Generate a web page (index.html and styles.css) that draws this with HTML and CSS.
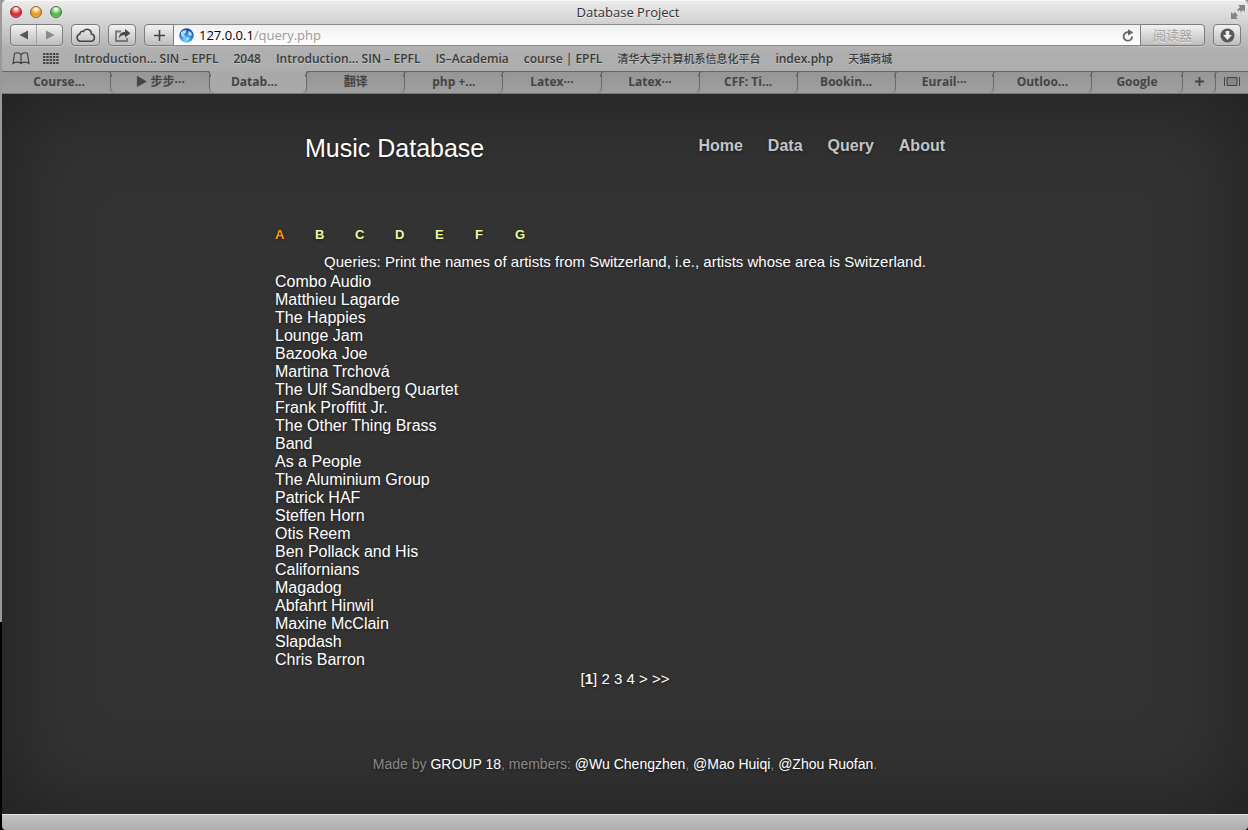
FILE: index.html
```html
<!DOCTYPE html>
<html lang="en">
<head>
<meta charset="utf-8">
<title>Database Project</title>
<link rel="stylesheet" href="styles.css">
</head>
<body>
<div class="desktop">
<div class="window">
  <header class="chrome">
    <div class="titlebar">
      <div class="lights">
        <button class="light red" aria-label="Close"></button>
        <button class="light amber" aria-label="Minimize"></button>
        <button class="light green" aria-label="Zoom"></button>
      </div>
      <div class="window-title">Database Project</div>
      <button class="fullscreen" aria-label="Full screen">
        <svg width="16" height="16" viewBox="0 0 16 16" fill="#858585"><path d="M8 1h7v7l-2-2-3 3-3-3 3-3zM1 8l2 2 2-2 3 3-2 2 2 2H1z"/><path d="M6 9.500L9.500 6l1.500 1.500L7.500 11z" fill="#dedede"/></svg>
      </button>
    </div>
    <div class="toolbar">
      <div class="pair">
        <button class="pair-btn" aria-label="Back"><svg width="10" height="10" viewBox="0 0 10 10"><path d="M9 .5v9L.5 5z" fill="#555"/></svg></button>
        <button class="pair-btn" aria-label="Forward"><svg width="10" height="10" viewBox="0 0 10 10"><path d="M1 .5v9L9.500 5z" fill="#888"/></svg></button>
      </div>
      <button class="tool" aria-label="iCloud tabs"><svg width="20" height="15" viewBox="0 0 20 15"><path d="M4.500 13.200a3.600 3.600 0 0 1-.6-7.100 2.500 2.500 0 0 1 3.500-2.500 4.200 4.200 0 0 1 7.900 2.500 3.600 3.600 0 0 1 .2 7.100z" fill="none" stroke="#444" stroke-width="1.500"/></svg></button>
      <button class="tool narrow" aria-label="Share"><svg width="17" height="15" viewBox="0 0 17 15"><path d="M7 3.500H2v9.500h11v-3" fill="none" stroke="#777" stroke-width="1.800"/><path d="M5 10.500c.2-4.500 2-6.500 6-6.500V1l5.500 4.300L11 9.500V6.900C8 6.900 6.500 7.700 5 10.500z" fill="#4a4a4a"/></svg></button>
      <div class="address">
        <button class="addr-btn add" aria-label="Add bookmark"><svg width="11" height="11" viewBox="0 0 11 11"><path d="M5.500 0v11M0 5.500h11" stroke="#444" stroke-width="1.600"/></svg></button>
        <div class="field">
          <svg class="globe" width="15" height="15" viewBox="0 0 15 15"><defs><radialGradient id="sea" cx="45%" cy="80%" r="80%"><stop offset="0" stop-color="#7fe0ff"/><stop offset=".5" stop-color="#2f86e0"/><stop offset="1" stop-color="#1c3f9f"/></radialGradient></defs><circle cx="7.500" cy="7.500" r="7.200" fill="url(#sea)"/><path d="M2 4.500l3-2.500 2.500.5-.5 2L5.500 6l-1 .5 1.500 1.500-.5 2L4 9 2 7zM9.500 3l2.500 1 1 3-2 1-2-1.500zM8 9l2.500.5L9 12.500 7.500 11z" fill="#d5f0ff" opacity=".8"/></svg>
          <div class="url"><span class="host">127.0.0.1</span>/query.php</div>
          <button class="reload" aria-label="Reload"><svg width="12" height="13" viewBox="0 0 12 13"><path d="M10.200 7.500A4.300 4.300 0 1 1 7 3.200" fill="none" stroke="#666" stroke-width="1.800"/><path d="M6 .2l5.300 3.400L6 6.500z" fill="#666"/></svg></button>
        </div>
        <button class="addr-btn reader" disabled>阅读器</button>
      </div>
      <button class="tool downloads" aria-label="Downloads"><svg width="15" height="15" viewBox="0 0 15 15"><circle cx="7.500" cy="7.500" r="7" fill="#585858"/><path d="M5.700 3h3.600v4h2.700l-4.500 5L3 7h2.700z" fill="#eee"/></svg></button>
    </div>
    <nav class="bookmarks" aria-label="Bookmarks">
      <button class="plain" aria-label="All bookmarks"><svg width="18" height="13" viewBox="0 0 18 13"><path d="M9 2.500C7 .5 4 .5 2.500 1.500L1 11.500C3.500 10 7 10 9 11.500 11 10 14.500 10 17 11.500L15.500 1.500C14 .5 11 .5 9 2.500zM9 2.500v9" fill="none" stroke="#444" stroke-width="1.200"/></svg></button>
      <button class="plain" aria-label="Top sites"><svg width="16" height="12" viewBox="0 0 16 12"><path d="M0 1h16M0 4h16M0 7h16M0 10h16" stroke="#444" stroke-width="2" stroke-dasharray="2.400 .9"/></svg></button>
      <a href="#">Introduction... SIN – EPFL</a>
      <a href="#">2048</a>
      <a href="#">Introduction... SIN – EPFL</a>
      <a href="#">IS–Academia</a>
      <a href="#">course | EPFL</a>
      <a href="#" class="cjk">清华大学计算机系信息化平台</a>
      <a href="#">index.php</a>
      <a href="#" class="cjk">天猫商城</a>
    </nav>
    <div class="tabs" role="tablist">
      <button class="tab first" role="tab">Course...</button>
      <button class="tab before" role="tab">▶ 步步···</button>
      <button class="tab before active" role="tab" aria-selected="true">Datab...</button>
      <button class="tab after" role="tab">翻译</button>
      <button class="tab after" role="tab">php +...</button>
      <button class="tab after" role="tab">Latex···</button>
      <button class="tab after" role="tab">Latex···</button>
      <button class="tab after" role="tab">CFF: Ti...</button>
      <button class="tab after" role="tab">Bookin...</button>
      <button class="tab after" role="tab">Eurail···</button>
      <button class="tab after" role="tab">Outloo...</button>
      <button class="tab after" role="tab">Google</button>
      <button class="tab after" aria-label="New tab"><svg width="9" height="9" viewBox="0 0 9 9"><path d="M4.500 0v9M0 4.500h9" stroke="#444" stroke-width="1.800"/></svg></button>
      <button class="tab last" aria-label="Show all tabs"><svg width="16" height="9" viewBox="0 0 16 9"><path d="M.5 0v9M15.500 0v9" stroke="#444"/><path d="M3 .5h10v8H3z" fill="#858585" stroke="#444"/></svg></button>
    </div>
  </header>

  <main class="page">
    <div class="content">
      <div class="site-head">
        <h1>Music Database</h1>
        <nav class="site-nav"><a href="#">Home</a><a href="#">Data</a><a href="#">Query</a><a href="#">About</a></nav>
      </div>
      <nav class="letters" aria-label="Queries"><a href="#" class="current">A</a><a href="#">B</a><a href="#">C</a><a href="#">D</a><a href="#">E</a><a href="#">F</a><a href="#">G</a></nav>
      <p class="query">Queries: Print the names of artists from Switzerland, i.e., artists whose area is Switzerland.</p>
      <ul class="artists">
        <li>Combo Audio</li>
        <li>Matthieu Lagarde</li>
        <li>The Happies</li>
        <li>Lounge Jam</li>
        <li>Bazooka Joe</li>
        <li>Martina Trchová</li>
        <li>The Ulf Sandberg Quartet</li>
        <li>Frank Proffitt Jr.</li>
        <li>The Other Thing Brass Band</li>
        <li>As a People</li>
        <li>The Aluminium Group</li>
        <li>Patrick HAF</li>
        <li>Steffen Horn</li>
        <li>Otis Reem</li>
        <li>Ben Pollack and His Californians</li>
        <li>Magadog</li>
        <li>Abfahrt Hinwil</li>
        <li>Maxine McClain</li>
        <li>Slapdash</li>
        <li>Chris Barron</li>
      </ul>
      <nav class="pager" aria-label="Pages">[<b>1</b>] <a href="#">2</a> <a href="#">3</a> <a href="#">4</a> <a href="#">&gt;</a> <a href="#">&gt;&gt;</a></nav>
      <footer class="credits">Made by <a href="#">GROUP 18</a>, members: <a href="#">@Wu Chengzhen</a>, <a href="#">@Mao Huiqi</a>, <a href="#">@Zhou Ruofan</a>.</footer>
    </div>
  </main>
  <div class="statusbar"></div>
</div>
</div>
</body>
</html>
```
FILE: styles.css
```css
* { box-sizing: border-box; }
body { margin: 0; }
button { margin: 0; padding: 0; border: 0; background: none; font: inherit; color: inherit; }
a { color: inherit; text-decoration: none; }
svg { display: block; }

.desktop {
  min-height: 100vh;
  padding-left: 2px;
  background: linear-gradient(#999 75%, #000 75%);
  display: flex;
}
.window {
  flex: 1;
  display: flex;
  flex-direction: column;
  border-radius: 5px 5px 4px 4px;
  overflow: hidden;
  font-family: "Open Sans", "Noto Sans CJK SC", sans-serif;
  color: #3a3a3a;
}

.chrome { background: linear-gradient(#ececec, #cfcfcf 25px, #b0b0b0 50px, #a9a9a9); }
.titlebar {
  height: 24px;
  padding: 0 2px 0 8px;
  display: grid;
  grid-template-columns: 1fr auto 1fr;
  align-items: center;
  border-top: 1px solid #f8f8f8;
}
.lights { display: flex; gap: 8px; padding-bottom: 2px; }
.light { width: 12px; height: 12px; border-radius: 50%; border: 1px solid #777; }
.red { background: radial-gradient(circle at 50% 20%, #fff 5%, #f0494a 45%, #d31f2b 65%, #ff9a92); border-color: #8f2b2e; }
.amber { background: radial-gradient(circle at 50% 20%, #fff 5%, #f5a93a 45%, #e29320 65%, #ffe680); border-color: #946020; }
.green { background: radial-gradient(circle at 50% 20%, #fff 5%, #72c966 45%, #4fae46 65%, #c4f5a0); border-color: #3f7438; }
.window-title { padding-bottom: 2px; font-size: 13px; line-height: 20px; color: #333; text-shadow: 0 1px 0 #eee; }
.fullscreen { justify-self: end; padding-bottom: 2px; }

.toolbar { height: 22px; padding: 0 7px 0 8px; display: flex; }
.tool, .pair, .addr-btn {
  border: 1px solid #7c7c7c;
  border-radius: 4px;
  background: linear-gradient(#f2f2f2, #bdbdbd);
  box-shadow: 0 1px 0 #c8c8c8;
}
.pair { width: 53px; display: flex; margin-right: 8px; }
.pair-btn { flex: 1; display: grid; place-items: center; }
.pair-btn + .pair-btn { border-left: 1px solid #a5a5a5; }
.tool { width: 29px; display: grid; place-items: center; margin-right: 8px; }
.narrow { width: 28px; }
.address { flex: 1; display: flex; }
.addr-btn { display: grid; place-items: center; }
.add { width: 30px; border-radius: 4px 0 0 4px; }
.field {
  flex: 1;
  display: flex;
  align-items: center;
  gap: 5px;
  padding: 0 6px 0 5px;
  border: solid #8a8a8a;
  border-width: 1px 0;
  background: linear-gradient(#f0f0f0, #fff);
}
.url { flex: 1; font-size: 13px; line-height: 20px; color: #999; }
.host { color: #000; }
.reader { width: 65px; border-radius: 0 4px 4px 0; font-size: 13px; line-height: 18px; color: #a2a2a2; text-shadow: 0 1px 0 #eee; }
.downloads { margin: 0 0 0 8px; width: 28px; }

.bookmarks {
  height: 25px;
  padding: 0 10px;
  display: flex;
  align-items: center;
  gap: 15px;
  font-size: 12px;
  font-weight: 600;
  white-space: nowrap;
  text-shadow: 0 1px 0 #c5c5c5;
}
.bookmarks a { line-height: 18px; }
.plain + .plain { margin-left: -2px; }
.bookmarks .cjk { font-size: 11px; font-weight: 500; }

.tabs {
  height: 23px;
  display: grid;
  grid-template-columns: 108fr 99fr repeat(9, 98fr) 91fr 33px 32px;
  background: #9a9a9a;
  border-bottom: 1px solid #777;
  font-size: 12px;
  font-weight: 700;
  color: #444;
  text-shadow: 0 1px 0 #b5b5b5;
}
.tab {
  position: relative;
  display: grid;
  place-items: center;
  border: 0 solid #686868;
  border-top-width: 1px;
  padding-bottom: 2px;
  background: linear-gradient(#969696, #9f9f9f);
  line-height: 18px;
  white-space: nowrap;
}
.first { padding-left: 6px; }
.before { border-left-width: 1px; border-bottom-left-radius: 5px; }
.after, .active { border-right-width: 1px; border-bottom-right-radius: 5px; }
.active { border-top-color: #a9a9a9; background: #a9a9a9; padding-right: 8px; }
.before::before, .active::after, .after::after {
  content: "";
  position: absolute;
  z-index: 1;
  top: -1px;
  width: 5px;
  height: 5px;
  border: 0 solid #686868;
}
.before::before { left: -5px; border-width: 1px 1px 0 0; border-top-right-radius: 5px; }
.active::after, .after::after { right: -5px; border-width: 1px 0 0 1px; border-top-left-radius: 5px; }

.page {
  flex: 1;
  padding: 0 20px;
  background: #333;
  box-shadow: inset 0 0 90px rgba(0, 0, 0, .4);
  font-family: "Liberation Sans", Arial, sans-serif;
  font-size: 16px;
  color: #fff;
  text-shadow: 0 1px 3px rgba(0, 0, 0, .5);
}
.content { max-width: 700px; margin: 0 auto; }
.site-head { display: flex; justify-content: space-between; padding: 39px 30px 0; }
h1 { margin: 0; font-size: 25px; line-height: 30px; font-weight: 400; }
.site-nav { display: flex; gap: 25px; font-weight: 700; line-height: 26px; color: #c4c4c4; }
.letters { display: flex; margin-top: 62px; font-size: 13px; line-height: 20px; font-weight: 700; color: #e8f8a0; }
.letters a { width: 40px; }
.letters .current { color: #f90; }
.query { margin: 7px 0 1px; line-height: 20px; font-size: 15px; text-align: center; }
.artists { list-style: none; margin: 0; padding: 0; width: 192px; line-height: 18px; }
.pager { line-height: 20px; text-align: center; font-size: 15px; }
.credits { margin-top: 66px; line-height: 18px; font-size: 14px; text-align: center; color: #888; }
.credits a { color: #fff; }

.statusbar { height: 16px; border-top: 1px solid #e5e5e5; background: linear-gradient(#c2c2c2, #adadad); }
```
